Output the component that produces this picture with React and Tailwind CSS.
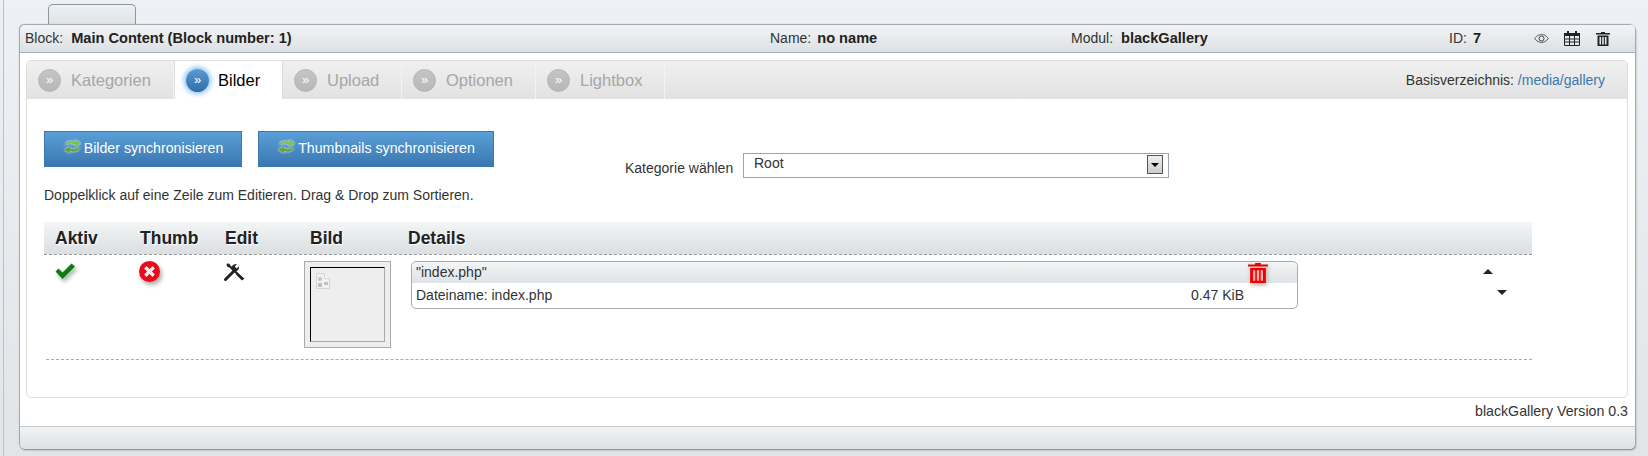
const font = { fontFamily: '"Liberation Sans", Arial, sans-serif' };

function TabDot({ active }) {
  return (
    <span
      className={
        active
          ? "flex h-[23px] w-[23px] shrink-0 items-center justify-center rounded-full bg-gradient-to-b from-[#5a9bd4] to-[#2f6ea8] text-[13px] leading-none text-white shadow-[0_0_5px_2px_#8cc4f0]"
          : "flex h-[23px] w-[23px] shrink-0 items-center justify-center rounded-full border border-[#b5b5b5] bg-gradient-to-b from-[#c4c4c4] to-[#b8b8b8] text-[13px] leading-none text-white"
      }
    >
      <span className="-mt-[2px]">»</span>
    </span>
  );
}

function Tab({ label, width, active }) {
  return (
    <div
      className={
        active
          ? "flex h-full shrink-0 items-center gap-[9px] border-r border-l border-[#dddddd] bg-white pl-[11px] text-[16.5px] text-black"
          : "flex h-full shrink-0 items-center gap-[10px] border-r border-[#f3f3f3] pl-[11px] text-[16.5px] text-[#a6a6a6]"
      }
      style={{ width }}
    >
      <TabDot active={active} />
      <span>{label}</span>
    </div>
  );
}

function SyncIcon() {
  return (
    <svg width="19" height="17" viewBox="0 0 19 17" className="drop-shadow-[0_0_1px_#ffffff]">
      <path d="M2 7 C3 3 8 2 12 4 L12 1.5 L18 5.5 L11.5 8.5 L11.5 6.5 C8 5 5 5.5 2 7 Z" fill="#7cc24a" />
      <path d="M17 9 C16 13 11 15 7 13 L7 15.5 L1 11.5 L7.5 8.5 L7.5 10.5 C11 12 14 11 17 9 Z" fill="#5fa838" />
    </svg>
  );
}

function SyncButton({ label, width }) {
  return (
    <button
      className="flex h-[36px] shrink-0 items-center justify-center gap-[2px] border border-[#3a78b0] bg-gradient-to-b from-[#5a9fd8] to-[#3b77b0] text-[14.2px] text-white"
      style={{ width }}
    >
      <span className="-mt-[5px]"><SyncIcon /></span>
      <span>{label}</span>
    </button>
  );
}

function Eye() {
  return (
    <svg width="15" height="9" viewBox="0 0 15 9">
      <path d="M0.7 4.5 C3 1.2 5.5 0.6 7.5 0.6 C9.5 0.6 12 1.2 14.3 4.5 C12 7.8 9.5 8.4 7.5 8.4 C5.5 8.4 3 7.8 0.7 4.5 Z" fill="none" stroke="#444" strokeWidth="0.9" />
      <circle cx="7.5" cy="4.5" r="2.5" fill="none" stroke="#444" strokeWidth="1" />
    </svg>
  );
}

function Calendar() {
  return (
    <svg width="16" height="15" viewBox="0 0 16 15">
      <path d="M3 0h2v2h6V0h2v2h3v3H0V2h3z" fill="#222" />
      <path d="M0.5 5v9.5h15V5M5.5 5v9.5M10.5 5v9.5M0.5 8h15M0.5 11h15" fill="none" stroke="#222" />
    </svg>
  );
}

function Trash({ color = "#222", w = 14, h = 14, className = "" }) {
  return (
    <svg width={w} height={h} viewBox="0 0 14 14" className={className}>
      <path d="M5 0h4v1h5v1.4H0V1h5z" fill={color} />
      <path d="M1.5 3.5h11V14h-11z" fill={color} />
      <path d="M3.5 5h1.6v7.5H3.5zM6.2 5h1.6v7.5H6.2zM8.9 5h1.6v7.5H8.9z" fill={color === "#222" ? "#e4e7ea" : "#ffb0b0"} />
    </svg>
  );
}

function Check() {
  return (
    <svg width="21" height="17" viewBox="0 0 21 17" className="drop-shadow-[2px_3px_2px_#aaaaaa]">
      <path d="M0.5 8.5 L3.5 5.5 L7.5 9.5 L16.5 0.5 L20 3.5 L7.5 16 Z" fill="#0b7d12" />
    </svg>
  );
}

function ErrorDot() {
  return (
    <svg width="21" height="21" viewBox="0 0 21 21" className="drop-shadow-[2px_3px_2px_#aaaaaa]">
      <circle cx="10.5" cy="10.5" r="10.5" fill="#ea0a1c" />
      <path d="M6.3 6.3 L14.7 14.7 M14.7 6.3 L6.3 14.7" stroke="#fbe4e4" strokeWidth="3.4" />
    </svg>
  );
}

// wrench crossed with a screwdriver
function Tools() {
  return (
    <svg width="21" height="18" viewBox="0 0 21 18">
      <path d="M1.5 16.5 L9.5 8.5" stroke="#222" strokeWidth="3" strokeLinecap="round" />
      <path d="M8 7 C6.5 4 9 0.5 13 1 L10.8 3.4 L12.6 5.4 L15 3.2 C15.5 7 12 9.2 9.6 8.4 Z" fill="#222" />
      <path d="M2.5 0.8 L5 0.5 L7 3 L19.8 15.4 L18.2 17 L5.4 4.6 L3 3.4 Z" fill="#222" />
      <path d="M13.5 10 L20.3 15.6 L18 17.6 L12 11.4 Z" fill="#222" />
    </svg>
  );
}

function BrokenImg() {
  return (
    <svg width="14" height="16" viewBox="0 0 14 16">
      <path d="M0.5 0.5h8l5 5v10h-13z" fill="#f1f1f1" stroke="#d5d5d5" />
      <path d="M8.5 0.5v5h5" fill="#fafafa" stroke="#d5d5d5" />
      <circle cx="4" cy="6" r="2" fill="#c5c5c5" />
      <rect x="2" y="10" width="4" height="4" fill="#c0c0c0" />
      <rect x="8" y="9" width="4" height="3" fill="#c0c0c0" />
    </svg>
  );
}

export default function App() {
  return (
    <div className="h-[456px] w-[1648px] overflow-hidden bg-gradient-to-b from-[#edf0f4] to-[#e2e5e8] pl-[3px] text-[#333333]" style={font}>
      <div className="h-full border-l border-[#bfbfc9] pl-[16px] pt-[4px]">
        <div className="ml-[28px] h-[21px] w-[88px] rounded-t-[5px] border border-b-0 border-[#8c98a0] bg-gradient-to-b from-[#eef1f4] to-[#dfe3e6]" />

        <div className="flex h-[424px] w-[1615px] flex-col rounded-[5px] bg-white shadow-[-1px_-1px_1px_#a0a5aa,1px_1px_2px_#8f959b]">
          <div className="flex h-[28px] shrink-0 items-center rounded-t-[5px] border-b border-[#a5b0ba] bg-gradient-to-b from-[#f2f4f6] to-[#dde1e4] pl-[5px] text-[14px]">
            <div className="w-[745px] shrink-0"><span className="mr-[8px]">Block:</span><b className="text-[14.6px] text-[#222222]">Main Content (Block number: 1)</b></div>
            <div className="w-[301px] shrink-0"><span className="mr-[6px]">Name:</span><b className="text-[14.6px] text-[#222222]">no name</b></div>
            <div className="w-[378px] shrink-0"><span className="mr-[8px]">Modul:</span><b className="text-[14.6px] text-[#222222]">blackGallery</b></div>
            <div className="w-[85px] shrink-0"><span className="mr-[6px]">ID:</span><b className="text-[14.6px] text-[#222222]">7</b></div>
            <div className="flex items-center">
              <span className="w-[30px]"><Eye /></span>
              <span className="w-[32px]"><Calendar /></span>
              <Trash />
            </div>
          </div>

          <div className="flex flex-1 flex-col px-[6px] pt-[7px]">
            <div className="h-[338px] w-[1602px] shrink-0 rounded-[5px] border border-[#dddddd]">
              <div className="flex h-[38px] items-center rounded-t-[5px] bg-gradient-to-b from-[#f0f0f0] to-[#e2e2e2]">
                <Tab label="Kategorien" width={147} />
                <Tab label="Bilder" width={109} active />
                <Tab label="Upload" width={119} />
                <Tab label="Optionen" width={134} />
                <Tab label="Lightbox" width={129} />
                <div className="ml-auto pr-[22px] text-[14px] text-[#333333]">
                  Basisverzeichnis: <span className="text-[#3f76ae]">/media/gallery</span>
                </div>
              </div>

              <div className="px-[17px] pt-[32px]">
                <div className="flex items-start">
                  <SyncButton label="Bilder synchronisieren" width={198} />
                  <div className="ml-[16px]"><SyncButton label="Thumbnails synchronisieren" width={236} /></div>
                  <div className="ml-[131px] mt-[22px] flex items-start">
                    <span className="mt-[5px] w-[118px] text-[14px]">Kategorie wählen</span>
                    <div className="flex h-[25px] w-[426px] items-start justify-between border border-[#9aa3ad] pl-[10px] pr-[5px] text-[14px] leading-[18px]">
                      <span>Root</span>
                      <span className="mt-[1px] flex h-[19px] w-[16px] items-center justify-center border border-[#555555] bg-gradient-to-b from-[#eeeeee] to-[#cccccc]">
                        <span className="h-0 w-0 border-x-[4px] border-t-[4px] border-x-transparent border-t-black" />
                      </span>
                    </div>
                  </div>
                </div>

                <p className="mt-[8px] text-[14px] leading-[16px]">Doppelklick auf eine Zeile zum Editieren. Drag &amp; Drop zum Sortieren.</p>

                <div className="mt-[19px] flex h-[33px] w-[1488px] items-center border-b border-dashed border-[#999999] bg-gradient-to-b from-[#f3f5f6] to-[#dbdfe2] text-[17.5px] font-bold text-[#222222] [text-shadow:1px_1px_1px_#ffffff]">
                  <span className="w-[96px] pl-[11px]">Aktiv</span>
                  <span className="w-[85px]">Thumb</span>
                  <span className="w-[85px]">Edit</span>
                  <span className="w-[98px]">Bild</span>
                  <span>Details</span>
                </div>

                <div className="ml-[2px] flex h-[105px] w-[1486px] items-start border-b border-dashed border-[#aaaaaa] pt-[6px]">
                  <span className="mt-[2px] w-[93px] pl-[9px]"><Check /></span>
                  <span className="w-[85px]"><ErrorDot /></span>
                  <span className="mt-[2px] w-[80px]"><Tools /></span>
                  <div className="w-[107px]">
                    <div className="h-[87px] w-[87px] border border-[#aaaaaa] bg-[#eeeeee] p-[5px]">
                      <div className="h-[75px] w-[75px] border border-[#aaaaaa] border-t-black border-l-black pl-[5px] pt-[5px]">
                        <BrokenImg />
                      </div>
                    </div>
                  </div>
                  <div className="w-[887px] rounded-[5px] border border-[#aaaaaa] text-[14px]">
                    <div className="flex h-[21px] items-center justify-between rounded-t-[5px] bg-gradient-to-b from-[#f3f5f6] to-[#dfe3e6] pl-[4px] pr-[29px]">
                      <span>"index.php"</span>
                      <Trash color="#f00000" w={20} h={20} className="drop-shadow-[1px_2px_2px_#aaaaaa]" />
                    </div>
                    <div className="flex h-[25px] items-center justify-between pl-[4px] pr-[53px]">
                      <span>Dateiname: index.php</span>
                      <span>0.47 KiB</span>
                    </div>
                  </div>
                  <div className="ml-[185px] flex flex-col pt-[8px]">
                    <span className="h-0 w-0 border-x-[5.5px] border-b-[5px] border-x-transparent border-b-[#222222]" />
                    <span className="ml-[14px] mt-[16px] h-0 w-0 border-x-[5.5px] border-t-[5px] border-x-transparent border-t-[#222222]" />
                  </div>
                </div>
              </div>
            </div>
            <div className="flex h-[27px] w-[1602px] items-center justify-end text-[14.2px]">blackGallery Version 0.3</div>
          </div>

          <div className="h-[23px] shrink-0 rounded-b-[5px] border-t border-[#c4c8cc] bg-gradient-to-b from-[#f0f2f4] to-[#dfe2e5] shadow-[0_1px_1px_#8f959b]" />
        </div>
      </div>
    </div>
  );
}
